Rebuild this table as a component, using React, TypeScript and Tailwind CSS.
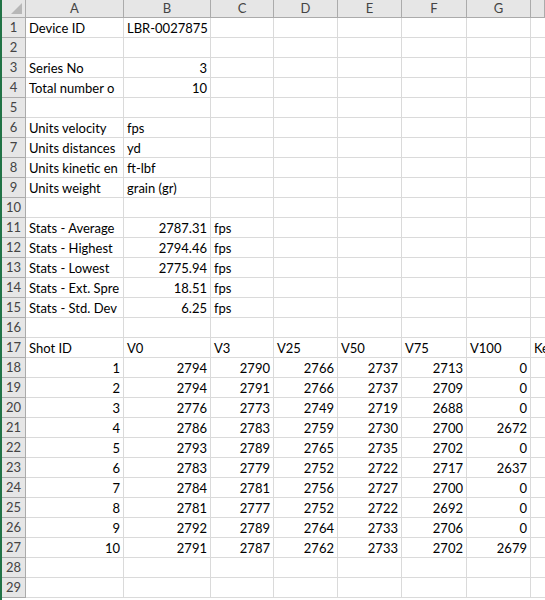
type Cell = string | number | null;

const columns = ["A", "B", "C", "D", "E", "F", "G", "H"];

const shots: number[][] = [
  [1, 2794, 2790, 2766, 2737, 2713, 0],
  [2, 2794, 2791, 2766, 2737, 2709, 0],
  [3, 2776, 2773, 2749, 2719, 2688, 0],
  [4, 2786, 2783, 2759, 2730, 2700, 2672],
  [5, 2793, 2789, 2765, 2735, 2702, 0],
  [6, 2783, 2779, 2752, 2722, 2717, 2637],
  [7, 2784, 2781, 2756, 2727, 2700, 0],
  [8, 2781, 2777, 2752, 2722, 2692, 0],
  [9, 2792, 2789, 2764, 2733, 2706, 0],
  [10, 2791, 2787, 2762, 2733, 2702, 2679],
];

// labels are cut where Excel clips them against the next filled cell
const sheet: Cell[][] = [
  ["Device ID", "LBR-0027875"],
  [],
  ["Series No", 3],
  ["Total number o", 10],
  [],
  ["Units velocity", "fps"],
  ["Units distances", "yd"],
  ["Units kinetic en", "ft-lbf"],
  ["Units weight", "grain (gr)"],
  [],
  ["Stats - Average", "2787.31", "fps"],
  ["Stats - Highest", "2794.46", "fps"],
  ["Stats - Lowest", "2775.94", "fps"],
  ["Stats - Ext. Spre", "18.51", "fps"],
  ["Stats - Std. Dev", "6.25", "fps"],
  [],
  ["Shot ID", "V0", "V3", "V25", "V50", "V75", "V100", "Ke"],
  ...shots,
  [],
  [],
];

function isNumeric(v: Cell) {
  return typeof v === "number" || (typeof v === "string" && /^-?\d+(\.\d+)?$/.test(v));
}

export default function App() {
  return (
    <div
      className="w-[545px] h-[600px] overflow-hidden bg-white border-l-2 border-[#217346]"
      style={{ fontFamily: "Lato, 'Open Sans', sans-serif" }}
    >
      <div className="grid grid-cols-[24px_98px_87px_63px_64px_64px_65px_64px_14px] grid-rows-[18px_repeat(29,20px)] text-[13px] text-black">
        {/* corner */}
        <div className="relative bg-[#e6e6e6] border-r border-b border-[#ababab]">
          <div className="absolute right-[3px] bottom-[3px] w-0 h-0 border-l-[11px] border-l-transparent border-b-[11px] border-b-[#b7b7b7]" />
        </div>
        {columns.map((c) => (
          <div
            key={c}
            className="flex items-center justify-center bg-[#e6e6e6] border-r border-b border-[#ababab] text-[#444]"
          >
            {c === "H" ? "" : c}
          </div>
        ))}

        {sheet.map((row, r) => (
          <>
            <div
              key={`h${r}`}
              className="flex items-center justify-center bg-[#e6e6e6] border-r border-b border-[#ababab] text-[#444]"
            >
              {r + 1}
            </div>
            {columns.map((_, c) => {
              const v = row[c] ?? null;
              const right = isNumeric(v);
              return (
                <div
                  key={`${r}-${c}`}
                  className={`flex items-center overflow-hidden whitespace-nowrap border-b border-[#dadada] pt-[2px] ${
                    c === 7 ? "" : "border-r"
                  } ${right ? "justify-end pr-[3px]" : "justify-start pl-[3px]"}`}
                >
                  {v}
                </div>
              );
            })}
          </>
        ))}
      </div>
    </div>
  );
}
